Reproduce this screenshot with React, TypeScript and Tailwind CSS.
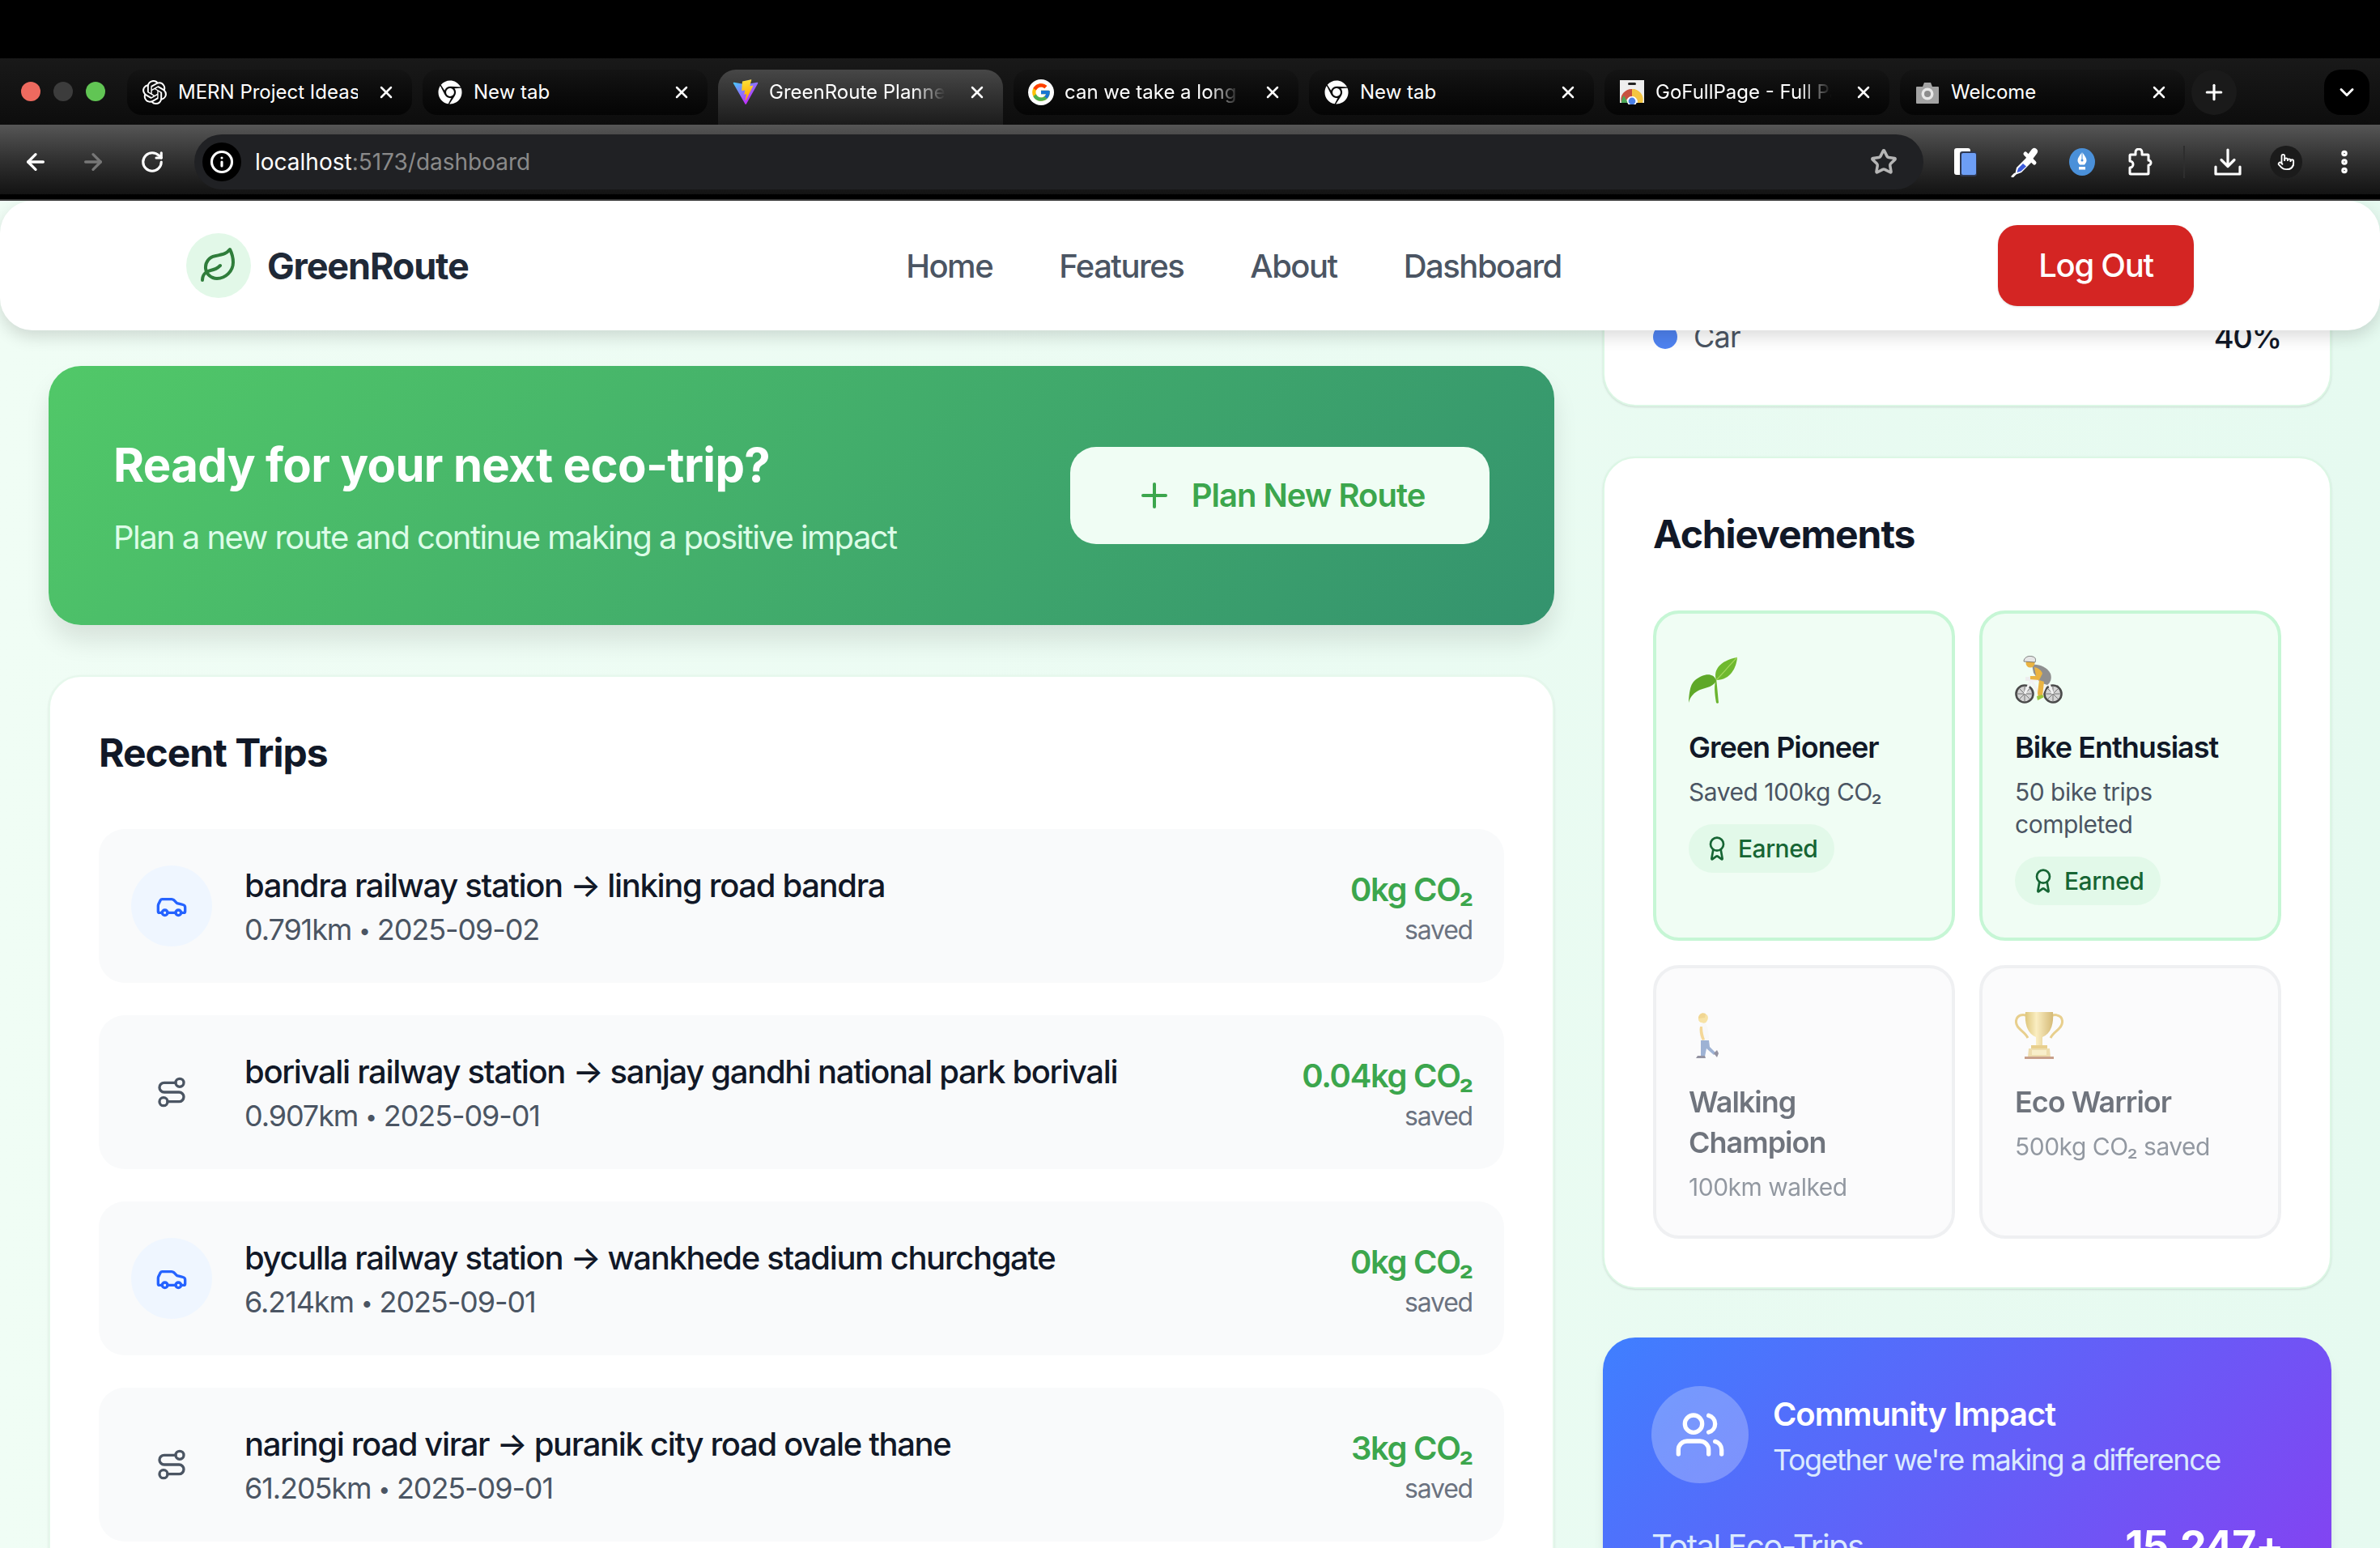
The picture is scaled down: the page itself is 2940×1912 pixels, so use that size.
import React from "react";
import { SiOpenai } from "react-icons/si";
import { FaChrome } from "react-icons/fa";
import { FcGoogle } from "react-icons/fc";
import {
  ArrowLeft, ArrowRight, RotateCw, Star, EllipsisVertical, X, Plus, ChevronDown,
  Leaf, Car, Route, Award, Users, Info, Pointer,
} from "lucide-react";

const ViteIcon = () => (
  <svg width="34" height="34" viewBox="0 0 410 404">
    <defs>
      <linearGradient id="va" x1="6" y1="33" x2="235" y2="344" gradientUnits="userSpaceOnUse">
        <stop stopColor="#41D1FF" />
        <stop offset="1" stopColor="#BD34FE" />
      </linearGradient>
      <linearGradient id="vb" x1="194" y1="8" x2="236" y2="292" gradientUnits="userSpaceOnUse">
        <stop stopColor="#FFEA83" />
        <stop offset="0.08" stopColor="#FFDD35" />
        <stop offset="1" stopColor="#FFA800" />
      </linearGradient>
    </defs>
    <path d="M399.6 59.5 215.9 388c-3.8 6.8-13.5 6.8-17.4.1L11.2 59.5C7 52.1 13.3 43.2 21.6 44.7l183.9 32.9c1.2.2 2.4.2 3.5 0l180-32.8c8.3-1.5 14.7 7.3 10.6 14.7Z" fill="url(#va)" />
    <path d="M292.9 1.6 156.9 28.2c-2.2.4-3.9 2.3-4 4.6l-8.4 141.2c-.2 3.3 2.9 5.9 6.1 5.2l37.9-8.8c3.5-.8 6.7 2.3 6 5.9l-11.3 55.1c-.8 3.7 2.7 6.9 6.3 5.8l23.4-7.1c3.6-1.1 7.1 2 6.3 5.8l-17.9 86.6c-1.1 5.4 6.1 8.4 9.1 3.7l2-3.1 110.9-221.3c1.9-3.7-1.3-7.9-5.4-7.1l-39 7.5c-3.7.7-6.8-2.7-5.7-6.3l25.4-88.2c1.1-3.6-2-7.1-5.7-6.4Z" fill="url(#vb)" />
  </svg>
);

const GoFullPageIcon = () => (
  <svg width="30" height="30" viewBox="0 0 30 30">
    <rect x="0" y="0" width="30" height="28" fill="#eeeeee" />
    <rect x="10" y="3" width="10" height="3" rx="1.5" fill="#222" />
    <path d="M2 28a13 13 0 0 1 13-17 13 13 0 0 1 12 9H15a7 7 0 0 0-7 8Z" fill="#c8513f" />
    <path d="M15 11a13 13 0 0 1 13 17h-6a7 7 0 0 0-7-8Z" fill="#f4c542" />
    <path d="M2 28a13 13 0 0 1 3-9l5 9Z" fill="#4ba657" />
    <circle cx="15" cy="26" r="6" fill="#fff" />
    <circle cx="15" cy="26" r="4.4" fill="#4a80e8" />
  </svg>
);

const CameraIcon = () => (
  <svg width="30" height="30" viewBox="0 0 30 30">
    <path d="M2 8h7l2-5h8l2 5h7a1 1 0 0 1 1 1v19a1 1 0 0 1-1 1H2a1 1 0 0 1-1-1V9a1 1 0 0 1 1-1Z" fill="#a3a3a3" />
    <circle cx="15" cy="17" r="7.5" fill="#e8e8e8" />
    <circle cx="15" cy="17" r="4" fill="#8d8d8d" />
  </svg>
);

const PenIcon = () => (
  <svg width="32" height="34" viewBox="0 0 32 34">
    <ellipse cx="16" cy="17" rx="16" ry="17" fill="#4a90d9" />
    <path d="M16 5c3 4 5.5 7 5.5 10 0 2-1 3.500-2.500 5.500h-6c-1.500-2-2.500-3.500-2.500-5.500 0-3 2.500-6 5.500-10Z" fill="#fff" />
    <circle cx="16" cy="15" r="1.500" fill="#4a90d9" />
    <path d="M15.500 5h1v9h-1z" fill="#4a90d9" />
    <rect x="12" y="23" width="8" height="3.500" fill="#fff" />
  </svg>
);

const SidePanelIcon = () => (
  <svg width="30" height="36" viewBox="0 0 30 36">
    <rect x="1" y="1" width="20" height="33" rx="3" fill="#fff" />
    <rect x="8" y="5" width="21" height="31" rx="3" fill="#2f3850" />
    <rect x="10" y="7" width="18" height="27" rx="2" fill="#6d9ef5" />
  </svg>
);

const DropperIcon = () => (
  <svg width="36" height="38" viewBox="0 0 36 38">
    <path d="M7 35l2-9 14-14 6 6-14 14Z" fill="#fff" />
    <path d="M9.500 32l1.500-5 6-6 4 3.500-6.500 6Z" fill="#3b5bdb" />
    <path d="M20 9l11 11" stroke="#fff" strokeWidth="5" strokeLinecap="round" />
    <path d="M25 14l6-8" stroke="#fff" strokeWidth="8" strokeLinecap="round" />
    <path d="M4 37l3-3" stroke="#fff" strokeWidth="3" strokeLinecap="round" />
  </svg>
);

const ExtensionIcon = () => (
  <svg width="30" height="34" viewBox="0 0 30 34" fill="none" stroke="#fff" strokeWidth="3" strokeLinejoin="round">
    <path d="M3 8h6V5a4 4 0 0 1 8 0v3h7a1 1 0 0 1 1 1v6a3 3 0 0 1 0 6v10a1 1 0 0 1-1 1H3a1 1 0 0 1-1-1v-7a4 4 0 0 0 0-8V9a1 1 0 0 1 1-1Z" />
  </svg>
);

const DownloadIcon = () => (
  <svg width="34" height="34" viewBox="0 0 34 34" fill="none" stroke="#fff" strokeWidth="3.200" strokeLinecap="round" strokeLinejoin="round">
    <path d="M17 2v20M9 14.500l8 8 8-8M2 23v9h30v-9" />
  </svg>
);

const SproutEmoji = () => (
  <svg width="60" height="60" viewBox="0 0 60 60">
    <path d="M34 58c-2-12-3-22 0-30 1 8 2 20 3 30-1 1-2 1-3 0Z" fill="#6ab42f" />
    <path d="M34 30C30 18 38 6 60 2c-1 12-8 28-26 28Z" fill="#6fb92f" />
    <path d="M34 30C42 22 50 12 60 2" stroke="#a6d95f" strokeWidth="1.200" fill="none" />
    <path d="M34 34C30 24 18 26 8 34 4 38 1 42 0 62c0 0 0 0 0 0 2-8 7-13 14-16 8-3 18-4 20-12Z" transform="translate(0 -4)" fill="#5ea828" />
  </svg>
);

const BikeEmoji = () => (
  <svg width="60" height="60" viewBox="0 0 60 60">
    <g fill="#d4d4d4" stroke="#4a4a4a" strokeWidth="2.600">
      <circle cx="12" cy="47" r="10.500" />
      <circle cx="47" cy="47" r="10.500" />
    </g>
    <g stroke="#777" strokeWidth="1">
      <path d="M12 37v20M2 47h20M5 40l14 14M19 40 5 54" />
      <path d="M47 37v20M37 47h20M40 40l14 14M54 40 40 54" />
    </g>
    <path d="M12 47 20 30h20l7 17M20 30l12 20 8-18" stroke="#f2f2f2" strokeWidth="3" fill="none" />
    <path d="M21 11c8-1 18 2 23 11 2 6 0 11-4 14l-9-3-8-12Z" fill="#8f8f8f" />
    <path d="M24 14c5 1 9 4 10 8l-4 8-12-1 1-4 7 0Z" fill="#eab341" />
    <path d="M30 30l6 2-2 18-5 2-1-6Z" fill="#eab341" />
    <path d="M27 50l7-2 2 3-8 4Z" fill="#9bc53d" />
    <circle cx="19" cy="9" r="5.500" fill="#eab341" />
    <path d="M11 7c0-5 6-8 11-6 4 1 4 4 3 7Z" fill="#e6e6e6" stroke="#666" strokeWidth=".8" />
    <rect x="13" y="26" width="6" height="5" fill="#eee" />
  </svg>
);

const WalkEmoji = () => (
  <svg width="60" height="60" viewBox="0 0 60 60">
    <path d="M12 11c0-6 6-8 10-6 3 2 2 7 0 9-1 2-4 2-6 1-2 0-4-2-4-4Z" fill="#f2cf6a" />
    <path d="M12 10c0-6 5-8 9-6l-1 5c-3 0-6 1-8 1Z" fill="#e8bc4a" />
    <path d="M15 16h6c3 5 4 12 4 22H15c-2-8-2-16 0-22Z" fill="#f4f4f4" />
    <path d="M14 20c-1 5 0 12 3 17l3-1c-2-5-3-11-3-16Z" fill="#eebd52" />
    <path d="M15 37h10l1 8 8 8-3 2-9-8-2 10H15Z" fill="#5f7fb8" />
    <path d="M11 56h9l1 3H9ZM31 53l4-4 2 4-2 5Z" fill="#4c4a63" />
  </svg>
);

const TrophyEmoji = () => (
  <svg width="60" height="60" viewBox="0 0 60 60">
    <defs>
      <linearGradient id="tg" x1="0" x2="1" y1="0" y2="0">
        <stop stopColor="#c9a227" />
        <stop offset=".4" stopColor="#f8e39a" />
        <stop offset="1" stopColor="#b98c1d" />
      </linearGradient>
    </defs>
    <path d="M14 6C4 4 0 10 2 17c2 7 10 9 14 17M46 6c10-2 14 4 12 11-2 7-10 9-14 17" fill="none" stroke="#d9b044" strokeWidth="3" />
    <path d="M13 2h34c1 12-1 26-13 31v12h-8V33C14 28 12 14 13 2Z" fill="url(#tg)" />
    <rect x="20" y="43" width="20" height="4" fill="#d9b044" />
    <path d="M17 47h26l1 11H16Z" fill="#e4c77a" />
    <rect x="21" y="49" width="18" height="6" fill="#f5e3a8" />
    <rect x="12" y="57" width="36" height="3" fill="#a5623f" />
  </svg>
);

const Tab = ({ icon, title, active, fade }: { icon: React.ReactNode; title: string; active?: boolean; fade?: boolean }) => (
  <div
    className={
      active
        ? "w-[352px] h-[68px] rounded-t-[22px] bg-gradient-to-b from-[#474747] to-[#1c1c1c] flex items-start pt-[12px] pl-[18px] pr-[20px] shrink-0"
        : "w-[352px] h-[56px] rounded-[18px] bg-gradient-to-b from-[#141414] to-[#050505] flex items-start pt-[12px] pl-[18px] pr-[20px] shrink-0"
    }
  >
    <div className="w-[32px] h-[32px] flex items-center justify-center shrink-0">{icon}</div>
    <div
      className={
        fade
          ? "ml-[13px] w-[222px] h-[32px] text-[24px] leading-[32px] text-white whitespace-nowrap overflow-hidden [mask-image:linear-gradient(to_right,black_80%,transparent_98%)]"
          : "ml-[13px] w-[222px] h-[32px] text-[24px] leading-[32px] text-white whitespace-nowrap overflow-hidden"
      }
    >
      {title}
    </div>
    <X size={24} strokeWidth={2.5} className="ml-auto mt-[4px] text-white shrink-0" />
  </div>
);

const Slot = ({ children }: { children: React.ReactNode }) => (
  <div className="w-[72px] h-[68px] flex items-center justify-center shrink-0">{children}</div>
);

const Browser = () => (
  <div className="shrink-0">
    <div className="h-[72px] bg-black" />
    <div className="h-[82px] bg-gradient-to-b from-[#191919] to-[#0d0d0d] flex items-start pt-[14px]">
      <div className="w-[157px] shrink-0 flex items-center gap-[16px] pl-[26px] pt-[15px]">
        <div className="w-[24px] h-[24px] rounded-full bg-[#ee6a5f]" />
        <div className="w-[24px] h-[24px] rounded-full bg-[#3c3c3c]" />
        <div className="w-[24px] h-[24px] rounded-full bg-[#61c554]" />
      </div>
      <div className="flex items-start gap-[13px]">
        <Tab icon={<SiOpenai size={30} color="#fff" />} title="MERN Project Ideas" />
        <Tab icon={<FaChrome size={30} color="#fff" />} title="New tab" />
        <Tab icon={<ViteIcon />} title="GreenRoute Planner" active fade />
        <Tab icon={<span className="w-[32px] h-[32px] bg-white rounded-full flex items-center justify-center"><FcGoogle size={26} /></span>} title="can we take a long shot" fade />
        <Tab icon={<FaChrome size={30} color="#fff" />} title="New tab" />
        <Tab icon={<GoFullPageIcon />} title="GoFullPage - Full Page" fade />
        <Tab icon={<CameraIcon />} title="Welcome" />
      </div>
      <div className="ml-[8px] w-[56px] h-[56px] rounded-full bg-[#1a1a1a] flex items-center justify-center shrink-0">
        <Plus size={30} strokeWidth={2.5} className="text-white" />
      </div>
      <div className="ml-[108px] w-[56px] h-[56px] rounded-[20px] bg-black flex items-center justify-center shrink-0">
        <ChevronDown size={28} strokeWidth={2.5} className="text-white" />
      </div>
    </div>
    <div className="h-[94px] bg-gradient-to-b from-[#565656] via-[#2e2e2e] to-[#0e0e0e] flex items-start pt-[12px] relative">
      <div className="w-[240px] shrink-0 flex items-center h-[68px] pl-[28px]">
        <ArrowLeft size={32} strokeWidth={2.500} className="text-white" />
        <ArrowRight size={32} strokeWidth={2.500} className="ml-[39px] text-[#777]" />
        <RotateCw size={30} strokeWidth={2.500} className="ml-[42px] text-white" />
      </div>
      <div className="w-[2136px] h-[68px] rounded-full bg-[#202124] flex items-center pl-[10px] pr-[32px] shrink-0">
        <div className="w-[48px] h-[48px] rounded-full bg-black flex items-center justify-center">
          <Info size={30} strokeWidth={2.500} className="text-white" />
        </div>
        <div className="ml-[17px] text-[28px] leading-[40px] text-white">
          localhost<span className="text-[#8a8a8a]">:5173/dashboard</span>
        </div>
        <Star size={34} strokeWidth={2.500} className="ml-auto text-[#b5b5b5]" />
      </div>
      <div className="flex items-center h-[68px] pl-[16px]">
        <Slot><SidePanelIcon /></Slot>
        <Slot><DropperIcon /></Slot>
        <Slot><PenIcon /></Slot>
        <Slot><ExtensionIcon /></Slot>
        <div className="w-[36px] flex justify-center shrink-0"><div className="w-[2px] h-[40px] bg-[#2e2e2e]" /></div>
        <Slot><DownloadIcon /></Slot>
        <Slot>
          <div className="w-[40px] h-[40px] rounded-full bg-[#1b1b1b] flex items-center justify-center text-white">
            <Pointer size={22} strokeWidth={2} />
          </div>
        </Slot>
        <Slot><EllipsisVertical size={36} strokeWidth={3} className="text-white" /></Slot>
      </div>
      <div className="absolute left-0 right-0 bottom-0 h-[8px] bg-black border-b-[2px] border-[#3a3a3a]" />
    </div>
  </div>
);

const Navbar = () => (
  <div className="absolute left-0 right-0 top-0 h-[160px] bg-white rounded-[40px] shadow-[0_8px_20px_rgba(0,0,0,0.14)] flex items-center justify-between px-[230px] z-10">
    <div className="flex items-center gap-[20px] w-[350px]">
      <div className="w-[80px] h-[80px] rounded-full bg-[#e2f8e8] flex items-center justify-center shrink-0">
        <Leaf size={48} strokeWidth={2} className="text-[#2f7d3b]" />
      </div>
      <span className="mt-[2px] text-[45px] leading-[56px] font-bold text-[#1f2937] tracking-[-1.15px]">GreenRoute</span>
    </div>
    <div className="mt-[2px] flex items-center gap-[82px] text-[40px] leading-[56px] font-medium text-[#4b5563] tracking-[-1.5px]">
      <span>Home</span>
      <span>Features</span>
      <span>About</span>
      <span>Dashboard</span>
    </div>
    <button className="h-[100px] w-[242px] rounded-[24px] bg-[#d42523] text-white text-[40px] leading-[56px] font-medium tracking-[-1.3px] shadow-sm">Log Out</button>
  </div>
);

const trips = [
  { t: "bandra railway station → linking road bandra", km: "0.791km", d: "2025-09-02", v: "0kg CO₂", car: true },
  { t: "borivali railway station → sanjay gandhi national park borivali", km: "0.907km", d: "2025-09-01", v: "0.04kg CO₂", car: false },
  { t: "byculla railway station → wankhede stadium churchgate", km: "6.214km", d: "2025-09-01", v: "0kg CO₂", car: true },
  { t: "naringi road virar → puranik city road ovale thane", km: "61.205km", d: "2025-09-01", v: "3kg CO₂", car: false },
];

const TripRow = ({ t, km, d, v, car }: { t: string; km: string; d: string; v: string; car: boolean }) => (
  <div className="h-[190px] shrink-0 rounded-[32px] bg-[#f9fafb] flex items-center pl-[40px] pr-[39px]">
    <div className={car ? "w-[100px] h-[100px] rounded-full bg-[#eff6ff] flex items-center justify-center shrink-0" : "w-[100px] h-[100px] rounded-full flex items-center justify-center shrink-0"}>
      {car ? <Car size={40} strokeWidth={2} className="text-[#2563ff]" /> : <Route size={40} strokeWidth={2} className="text-[#4b5563]" />}
    </div>
    <div className="ml-[40px] flex-1 min-w-0">
      <div className="mt-[2px] text-[40px] leading-[56px] font-medium text-[#111827] tracking-[-1.34px] whitespace-nowrap">{t}</div>
      <div className="text-[36px] leading-[48px] mt-[2px] text-[#4b5563] tracking-[-1.1px] whitespace-nowrap">
        {km} <span className="text-[26px] align-[2px]">•</span> {d}
      </div>
    </div>
    <div className="text-right shrink-0">
      <div className="mt-[4px] text-[40px] leading-[56px] font-semibold text-[#3ca64d] tracking-[-1.3px]">{v}</div>
      <div className="text-[32px] leading-[44px] text-[#6b7280] tracking-[-1.2px]">saved</div>
    </div>
  </div>
);

const LeftColumn = () => (
  <div className="w-[1860px] shrink-0 pt-[204px]">
    <div className="h-[320px] rounded-[40px] bg-[linear-gradient(135deg,#51c868,#34936e)] shadow-[0_20px_30px_rgba(0,0,0,0.1)] flex items-center justify-between pl-[80px] pr-[80px]">
      <div className="mt-[10px]">
        <div className="mt-[-4px] text-[58px] leading-[72px] font-bold text-white tracking-[-0.65px]">Ready for your next eco-trip?</div>
        <div className="mt-[26px] text-[40px] leading-[56px] text-[#dcfce7] tracking-[-1.55px]">Plan a new route and continue making a positive impact</div>
      </div>
      <button className="w-[518px] h-[120px] rounded-[32px] bg-[#f0fdf4] flex items-center justify-center gap-[22px] text-[#3ca64d] text-[40px] leading-[56px] font-semibold tracking-[-1px]">
        <Plus size={48} strokeWidth={2} />
        Plan New Route
      </button>
    </div>
    <div className="mt-[62px] rounded-[40px] bg-white border-[2px] border-[#e6f8ec] px-[60px] pt-[62px] pb-[60px] shadow-sm">
      <div className="text-[48px] leading-[64px] font-bold text-[#111827] tracking-[-1px]">Recent Trips</div>
      <div className="mt-[62px] flex flex-col gap-[40px]">
        {trips.map((x) => (
          <TripRow key={x.t} {...x} />
        ))}
      </div>
    </div>
  </div>
);

const Earned = () => (
  <div className="mt-[20px] flex items-center gap-[10px] h-[60px] w-[180px] pl-[19px] rounded-full bg-[#e2f9e9] text-[#166534] text-[30px] leading-[44px] font-medium tracking-[-0.5px]">
    <Award size={32} strokeWidth={2} />
    Earned
  </div>
);

const Badge = ({ emoji, title, sub, earned }: { emoji: React.ReactNode; title: string; sub: string; earned: boolean }) => (
  <div className={earned ? "rounded-[32px] border-[4px] border-[#c6f6d5] bg-[#f0fdf4] p-[40px]" : "rounded-[32px] border-[4px] border-[#e5e7eb] bg-[#f9fafb] p-[40px] opacity-60"}>
    <div className="h-[100px] pt-[12px]">{emoji}</div>
    <div className="text-[36px] leading-[50px] font-semibold text-[#111827] tracking-[-1px]">{title}</div>
    <div className="mt-[10px] text-[30px] leading-[40px] text-[#4b5563] tracking-[-0.5px]">{sub}</div>
    {earned && <Earned />}
  </div>
);

const RightColumn = () => (
  <div className="w-[900px] shrink-0">
    <div className="h-[254px] rounded-b-[40px] bg-white border-[2px] border-t-0 border-[#dcf7e5] shadow-sm flex items-start justify-between pt-[146px] pl-[60px] pr-[60px]">
      <div className="flex items-center gap-[20px]">
        <div className="w-[30px] h-[30px] rounded-full bg-[#4f83f1]" />
        <span className="text-[36px] leading-[44px] text-[#4b5563] tracking-[-0.8px]">Car</span>
      </div>
      <span className="text-[38px] leading-[44px] font-medium text-[#111827] tracking-[-1.3px]">40%</span>
    </div>
    <div className="mt-[62px] h-[1028px] rounded-[40px] bg-white border-[2px] border-[#dcf7e5] shadow-sm px-[60px] pt-[62px]">
      <div className="text-[48px] leading-[64px] font-bold text-[#111827] tracking-[-1.1px]">Achievements</div>
      <div className="mt-[62px] grid grid-cols-2 grid-rows-[408px_338px] gap-[30px]">
        <Badge emoji={<SproutEmoji />} title="Green Pioneer" sub="Saved 100kg CO₂" earned />
        <Badge emoji={<BikeEmoji />} title="Bike Enthusiast" sub="50 bike trips completed" earned />
        <Badge emoji={<WalkEmoji />} title="Walking Champion" sub="100km walked" earned={false} />
        <Badge emoji={<TrophyEmoji />} title="Eco Warrior" sub="500kg CO₂ saved" earned={false} />
      </div>
    </div>
    <div className="mt-[60px] h-[400px] rounded-[40px] bg-[linear-gradient(135deg,#3f7fff,#8a3df0)] shadow-lg px-[60px] pt-[60px] text-white">
      <div className="flex items-center gap-[30px]">
        <div className="w-[120px] h-[120px] rounded-full bg-white/25 flex items-center justify-center">
          <Users size={64} strokeWidth={2} />
        </div>
        <div>
          <div className="mt-[4px] text-[40px] leading-[56px] font-semibold tracking-[-1.1px]">Community Impact</div>
          <div className="mt-[2px] text-[36px] leading-[52px] text-[#dbeafe] tracking-[-1.5px]">Together we're making a difference</div>
        </div>
      </div>
      <div className="mt-[50px] flex items-center justify-between">
        <span className="text-[40px] leading-[52px] text-[#dbeafe] tracking-[-1.5px]">Total Eco-Trips</span>
        <span className="text-[52px] leading-[56px] font-bold tracking-[-1.4px]">15,247+</span>
      </div>
    </div>
  </div>
);

export default function App() {
  return (
    <div className="w-[2940px] h-[1912px] overflow-hidden flex flex-col bg-black font-['Inter',sans-serif]">
      <Browser />
      <div className="relative flex-1 min-h-0 overflow-hidden bg-gradient-to-r from-[#f0fdf5] to-[#e6faf0]">
        <Navbar />
        <div className="flex gap-[60px] px-[60px]">
          <LeftColumn />
          <RightColumn />
        </div>
      </div>
    </div>
  );
}
